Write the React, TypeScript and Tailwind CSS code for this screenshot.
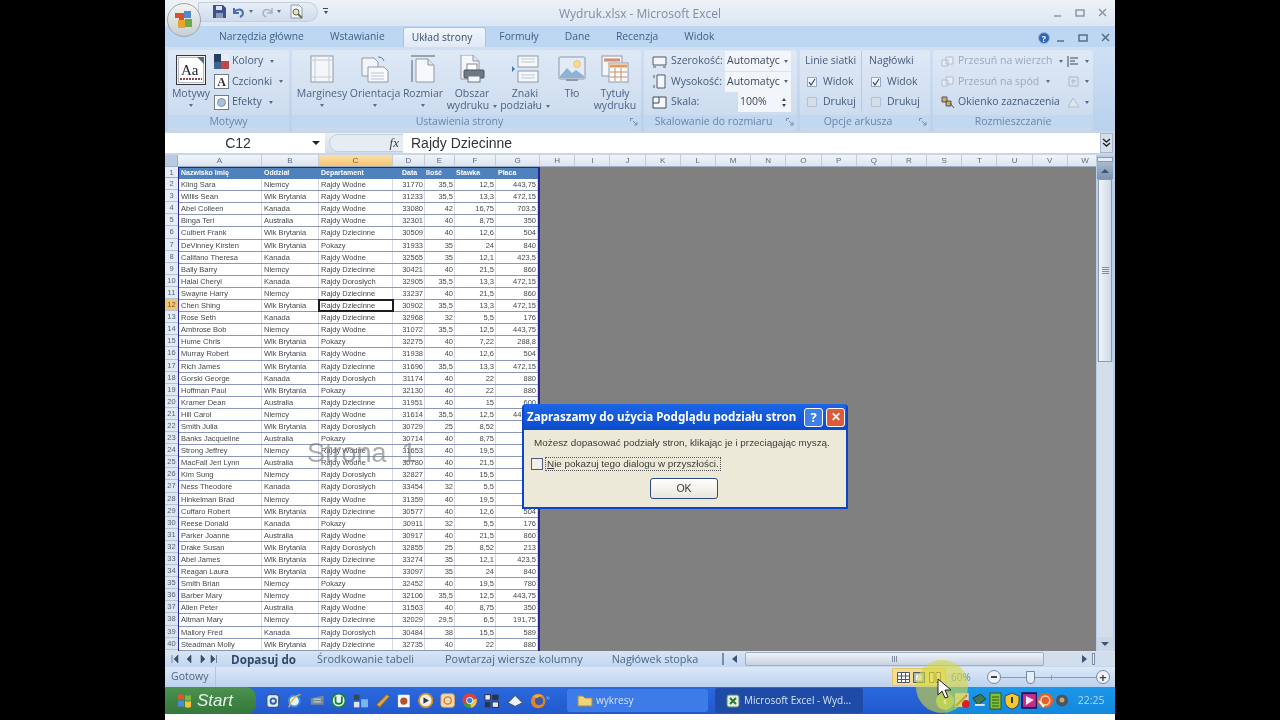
import * as React from "react"

const rows: string[][] = [
  ["Kling Sara", "Niemcy", "Rajdy Wodne", "31770", "35,5", "12,5", "443,75"],
  ["Willis Sean", "Wlk Brytania", "Rajdy Wodne", "31233", "35,5", "13,3", "472,15"],
  ["Abel Colleen", "Kanada", "Rajdy Wodne", "33080", "42", "16,75", "703,5"],
  ["Binga Teri", "Australia", "Rajdy Wodne", "32301", "40", "8,75", "350"],
  ["Culbert Frank", "Wlk Brytania", "Rajdy Dziecinne", "30509", "40", "12,6", "504"],
  ["DeVinney Kirsten", "Wlk Brytania", "Pokazy", "31933", "35", "24", "840"],
  ["Califano Theresa", "Kanada", "Rajdy Wodne", "32565", "35", "12,1", "423,5"],
  ["Bally Barry", "Niemcy", "Rajdy Dziecinne", "30421", "40", "21,5", "860"],
  ["Halai Cheryl", "Kanada", "Rajdy Dorosłych", "32905", "35,5", "13,3", "472,15"],
  ["Swayne Harry", "Niemcy", "Rajdy Dziecinne", "33237", "40", "21,5", "860"],
  ["Chen Shing", "Wlk Brytania", "Rajdy Dziecinne", "30902", "35,5", "13,3", "472,15"],
  ["Rose Seth", "Kanada", "Rajdy Dziecinne", "32968", "32", "5,5", "176"],
  ["Ambrose Bob", "Niemcy", "Rajdy Wodne", "31072", "35,5", "12,5", "443,75"],
  ["Hume Chris", "Wlk Brytania", "Pokazy", "32275", "40", "7,22", "288,8"],
  ["Murray Robert", "Wlk Brytania", "Rajdy Wodne", "31938", "40", "12,6", "504"],
  ["Rich James", "Wlk Brytania", "Rajdy Dziecinne", "31696", "35,5", "13,3", "472,15"],
  ["Gorski George", "Kanada", "Rajdy Dorosłych", "31174", "40", "22", "880"],
  ["Hoffman Paul", "Wlk Brytania", "Pokazy", "32130", "40", "22", "880"],
  ["Kramer Dean", "Australia", "Rajdy Dziecinne", "31951", "40", "15", "600"],
  ["Hill Carol", "Niemcy", "Rajdy Wodne", "31614", "35,5", "12,5", "443,75"],
  ["Smith Julia", "Wlk Brytania", "Rajdy Dorosłych", "30729", "25", "8,52", "213"],
  ["Banks Jacqueline", "Australia", "Pokazy", "30714", "40", "8,75", "350"],
  ["Strong Jeffrey", "Niemcy", "Rajdy Wodne", "31653", "40", "19,5", "780"],
  ["MacFall Jeri Lynn", "Australia", "Rajdy Wodne", "30780", "40", "21,5", "860"],
  ["Kim Sung", "Niemcy", "Rajdy Dorosłych", "32827", "40", "15,5", "620"],
  ["Ness Theodore", "Kanada", "Rajdy Dorosłych", "33454", "32", "5,5", "176"],
  ["Hinkelman Brad", "Niemcy", "Rajdy Wodne", "31359", "40", "19,5", "780"],
  ["Cuffaro Robert", "Wlk Brytania", "Rajdy Dziecinne", "30577", "40", "12,6", "504"],
  ["Reese Donald", "Kanada", "Pokazy", "30911", "32", "5,5", "176"],
  ["Parker Joanne", "Australia", "Rajdy Wodne", "30917", "40", "21,5", "860"],
  ["Drake Susan", "Wlk Brytania", "Rajdy Dorosłych", "32855", "25", "8,52", "213"],
  ["Abel James", "Wlk Brytania", "Rajdy Dziecinne", "33274", "35", "12,1", "423,5"],
  ["Reagan Laura", "Wlk Brytania", "Rajdy Wodne", "33097", "35", "24", "840"],
  ["Smith Brian", "Niemcy", "Pokazy", "32452", "40", "19,5", "780"],
  ["Barber Mary", "Niemcy", "Rajdy Wodne", "32106", "35,5", "12,5", "443,75"],
  ["Allen Peter", "Australia", "Rajdy Wodne", "31563", "40", "8,75", "350"],
  ["Altman Mary", "Niemcy", "Rajdy Dziecinne", "32029", "29,5", "6,5", "191,75"],
  ["Mallory Fred", "Kanada", "Rajdy Dorosłych", "30484", "38", "15,5", "589"],
  ["Steadman Molly", "Wlk Brytania", "Rajdy Dziecinne", "32735", "40", "22", "880"],
]

const headers = ["Nazwisko Imię", "Oddział", "Departament", "Data", "Ilość", "Stawka", "Płaca"]
const tabs = ["Narzędzia główne", "Wstawianie", "Układ strony", "Formuły", "Dane", "Recenzja", "Widok"]
const grayCols = ["H", "I", "J", "K", "L", "M", "N", "O", "P", "Q", "R", "S", "T", "U", "V", "W"]

const colGrid = "grid grid-cols-[83px_57px_74px_32px_30px_41px_42px]"

function Caret() {
  return <span className="inline-block align-middle ml-1 border-x-[2.5px] border-t-[3px] border-x-transparent border-t-[#5a6b82]" />
}

// ---- ribbon icons ----
function MarginIcon() {
  return (
    <svg width="24" height="28" viewBox="0 0 24 28">
      <rect x="1" y="1" width="22" height="26" fill="#f4f6f9" stroke="#8e9aa8" />
      <path d="M5 1v26M19 1v26M1 5h22M1 22h22" stroke="#c3ccd6" fill="none" />
    </svg>
  )
}

function OrientIcon() {
  return (
    <svg width="28" height="28" viewBox="0 0 28 28">
      <path d="M1 3h12l4 4v14H1z" fill="#f2f4f8" stroke="#8e9aa8" />
      <path d="M7 12h16l4 4v11H7z" fill="#f8f9fb" stroke="#8e9aa8" />
      <path d="M10 18h13M10 21h13M10 24h13" stroke="#bcc6d2" />
      <path d="M17 2c3 0 5 1 6 4" fill="none" stroke="#5f7a9c" />
    </svg>
  )
}

function SizeIcon() {
  return (
    <svg width="24" height="28" viewBox="0 0 24 28">
      <path d="M0 1h24M1 5v22" stroke="#55606e" fill="none" />
      <path d="M5 4h12l6 6v17H5z" fill="#f7f8fb" stroke="#8e9aa8" />
      <path d="M17 4v6h6" fill="#dfe5ec" stroke="#8e9aa8" />
    </svg>
  )
}

function PrintAreaIcon() {
  return (
    <svg width="26" height="28" viewBox="0 0 26 28">
      <path d="M2 0h12l6 6v18H2z" fill="#f4f6f9" stroke="#8e9aa8" />
      <path d="M14 0v6h6" fill="#dfe5ec" stroke="#8e9aa8" />
      <rect x="8" y="9" width="10" height="7" fill="#fff" stroke="#7c8794" />
      <rect x="5" y="15" width="20" height="8" rx="1" fill="#6d7884" stroke="#4a535d" />
      <rect x="9" y="21" width="12" height="6" fill="#f4f6f9" stroke="#6d7884" />
    </svg>
  )
}

function BreakIcon() {
  return (
    <svg width="28" height="28" viewBox="0 0 28 28">
      <rect x="7" y="1" width="20" height="11" fill="#f6f8fb" stroke="#8e9aa8" />
      <rect x="7" y="16" width="20" height="11" fill="#f6f8fb" stroke="#8e9aa8" />
      <path d="M10 4h14M10 7h14M10 20h14M10 23h14" stroke="#bcc6d2" />
      <path d="M1 11l3 3-3 3z" fill="#3f78b8" />
    </svg>
  )
}

function BackgroundIcon() {
  return (
    <svg width="28" height="26" viewBox="0 0 28 26">
      <rect x="1" y="1" width="26" height="22" rx="1" fill="#e3ecf6" stroke="#8e9aa8" />
      <circle cx="19" cy="8" r="3.5" fill="#f6dc8c" stroke="#d2a94a" strokeWidth=".5" />
      <path d="M2 20l7-8 5 5 4-3 8 6v2H2z" fill="#8fb1d6" />
      <path d="M8 23h12v2H8z" fill="#8e9aa8" />
    </svg>
  )
}

function TitlesIcon() {
  return (
    <svg width="28" height="28" viewBox="0 0 28 28">
      <rect x="1" y="1" width="20" height="20" fill="#f4f6f9" stroke="#8e9aa8" />
      <path d="M3 5h16" stroke="#d98c6a" strokeWidth="3" />
      <rect x="8" y="8" width="19" height="19" fill="#fbfcfd" stroke="#8e9aa8" />
      <path d="M9 11h17" stroke="#e09a5a" strokeWidth="3" />
      <path d="M9 17h17M9 22h17M14 13v13M20 13v13" stroke="#c98d66" />
    </svg>
  )
}

function ThemesIcon() {
  return (
    <svg width="30" height="30" viewBox="0 0 30 30">
      <rect x=".5" y=".5" width="29" height="29" fill="#f4f1e8" stroke="#33383f" />
      <rect x="2.5" y="2.5" width="25" height="25" fill="#fff" stroke="#b8bcc2" />
      <path d="M21 2h7v7z" fill="#5b6c80" />
      <path d="M4 24h22" stroke="#8a4d4d" strokeWidth="2" strokeDasharray="2 1" />
      <text x="5" y="20" fontSize="15" fontFamily="Liberation Serif, serif" fill="#20262e">Aa</text>
    </svg>
  )
}

function ColorsIcon() {
  return (
    <svg width="15" height="15" viewBox="0 0 15 15">
      <rect width="7" height="15" fill="#27405f" />
      <rect x="7" width="8" height="7" fill="#e9edf2" />
      <rect x="7" y="7" width="8" height="8" fill="#b84a4a" />
      <rect y="8" width="7" height="7" fill="#3f6491" />
    </svg>
  )
}

function FontsIcon() {
  return (
    <div className="w-[15px] h-[15px] bg-white border border-[#6f7c8c] flex items-center justify-center text-[12px] leading-none font-bold text-[#333] font-['Liberation_Serif',serif]">
      A
    </div>
  )
}

function EffectsIcon() {
  return (
    <div className="w-[15px] h-[15px] bg-white border border-[#6f7c8c] flex items-center justify-center">
      <div className="w-[9px] h-[9px] rounded-full bg-[#a9c1de] border border-[#7f97b6]" />
    </div>
  )
}

function Tiny({ d, fill = "none", stroke = "#4d5b6c" }: { d: string; fill?: string; stroke?: string }) {
  return (
    <svg width="15" height="15" viewBox="0 0 15 15">
      <path d={d} fill={fill} stroke={stroke} />
    </svg>
  )
}

function RibbonGroup({ label, launcher, className, children }: { label: string; launcher?: boolean; className: string; children: React.ReactNode }) {
  return (
    <div className={`flex flex-col rounded-[3px] bg-gradient-to-b from-[#dfe9f6] to-[#c8d9ed] ${className}`}>
      <div className="h-[65px] flex">{children}</div>
      <div className={`h-[13px] rounded-b-[3px] bg-[#c2d8f0] flex items-center justify-center relative text-[10.5px] leading-none text-[#6b86a8] ${launcher ? "pr-[14px]" : ""}`}>
        {label}
        {launcher && (
          <svg className="absolute right-[3px] top-[3px]" width="8" height="8" viewBox="0 0 8 8">
            <path d="M.5 3V.5H3M3 3l4 4M7 4v3H4" fill="none" stroke="#7a8ea8" />
          </svg>
        )}
      </div>
    </div>
  )
}

function BigButton({ width, icon, lines, caret }: { width: string; icon: React.ReactNode; lines: string[]; caret?: "below" | "inline" }) {
  return (
    <div className={`${width} flex flex-col items-center pt-[5px]`}>
      <div className="h-[28px] flex items-center justify-center">{icon}</div>
      <div className="mt-[4px] text-center text-[10.5px] leading-[12px] text-[#4d6485]">
        <div className="whitespace-nowrap">{lines[0]}</div>
        {lines[1] ? (
          <div className="whitespace-nowrap">
            {lines[1]}
            {caret === "inline" && <Caret />}
          </div>
        ) : caret === "below" ? (
          <div className="flex justify-center h-[12px] items-center">
            <span className="border-x-[2.5px] border-t-[3px] border-x-transparent border-t-[#5a6b82]" />
          </div>
        ) : null}
      </div>
    </div>
  )
}

function SmallRow({ icon, text, muted, caret }: { icon: React.ReactNode; text: string; muted?: boolean; caret?: boolean }) {
  return (
    <div className={`h-[20.5px] flex items-center gap-[3px] text-[10.5px] whitespace-nowrap ${muted ? "text-[#9aa9bc]" : "text-[#465c7c]"}`}>
      <div className="w-[15px] flex justify-center">{icon}</div>
      {text}
      {caret && <Caret />}
    </div>
  )
}

function Check({ checked, label }: { checked?: boolean; label: string }) {
  return (
    <div className="h-[20.5px] flex items-center gap-[6px] pl-[2px] text-[10.5px] text-[#465c7c]">
      <div className={`w-[10px] h-[10px] border flex items-center justify-center ${checked ? "bg-[#eef3f9] border-[#9aa9bc]" : "bg-[#d5dfeb] border-[#b4c1d1]"}`}>
        {checked && (
          <svg width="8" height="8" viewBox="0 0 8 8">
            <path d="M1 4l2 3 4-6" fill="none" stroke="#3a4a60" strokeWidth="1.2" />
          </svg>
        )}
      </div>
      {label}
    </div>
  )
}

function SizeField({ label, icon, value, kind }: { label: string; icon: React.ReactNode; value: string; kind: "select" | "spin" }) {
  return (
    <div className="h-[20.5px] flex items-center text-[10.5px] text-[#465c7c]">
      <div className="w-[18px] flex justify-center">{icon}</div>
      <div className="ml-[3px] flex-1 whitespace-nowrap">{label}</div>
      <div className={`h-[20px] bg-[#f2f6fb] flex items-center justify-between pl-[2px] pr-[3px] text-[#3b4a5e] ${kind === "select" ? "w-[66px]" : "w-[53px] pl-[2px]"}`}>
        <span>{value}</span>
        {kind === "select" ? (
          <span className="border-x-[2.5px] border-t-[3px] border-x-transparent border-t-[#5a6b82]" />
        ) : (
          <span className="flex flex-col gap-[3px] pr-[2px]">
            <span className="border-x-[2.5px] border-b-[3px] border-x-transparent border-b-[#3c4654]" />
            <span className="border-x-[2.5px] border-t-[3px] border-x-transparent border-t-[#3c4654]" />
          </span>
        )}
      </div>
    </div>
  )
}

function Ribbon() {
  return (
    <div className="h-[84px] flex gap-[3px] pl-[3px] pt-[3px] bg-gradient-to-b from-[#cfe0f4] to-[#b9d1ec]">
      <RibbonGroup label="Motywy" className="w-[121px]">
        <BigButton width="w-[46px]" icon={<div className="mt-[2px]"><ThemesIcon /></div>} lines={["Motywy"]} caret="below" />
        <div className="pt-[1px]">
          <SmallRow icon={<ColorsIcon />} text="Kolory" caret />
          <SmallRow icon={<FontsIcon />} text="Czcionki" caret />
          <SmallRow icon={<EffectsIcon />} text="Efekty" caret />
        </div>
      </RibbonGroup>
      <RibbonGroup label="Ustawienia strony" launcher className="w-[349px]">
        <div className="flex pl-[2px]">
          <BigButton width="w-[56px]" icon={<MarginIcon />} lines={["Marginesy"]} caret="below" />
          <BigButton width="w-[50px]" icon={<OrientIcon />} lines={["Orientacja"]} caret="below" />
          <BigButton width="w-[46px]" icon={<SizeIcon />} lines={["Rozmiar"]} caret="below" />
          <BigButton width="w-[52px]" icon={<PrintAreaIcon />} lines={["Obszar", "wydruku"]} caret="inline" />
          <BigButton width="w-[54px]" icon={<BreakIcon />} lines={["Znaki", "podziału"]} caret="inline" />
          <BigButton width="w-[40px]" icon={<BackgroundIcon />} lines={["Tło"]} />
          <BigButton width="w-[46px]" icon={<TitlesIcon />} lines={["Tytuły", "wydruku"]} />
        </div>
      </RibbonGroup>
      <RibbonGroup label="Skalowanie do rozmiaru" launcher className="w-[153px]">
        <div className="w-full pl-[6px] pr-[6px] pt-[1px]">
          <SizeField
            label="Szerokość:"
            value="Automatyc"
            kind="select"
            icon={<Tiny d="M1 3h13v8H1zM1 13h3M11 13h3" fill="#f4f6f9" />}
          />
          <SizeField
            label="Wysokość:"
            value="Automatyc"
            kind="select"
            icon={<Tiny d="M5 1h8v13H5zM2 1v3M2 11v3" fill="#f4f6f9" />}
          />
          <SizeField
            label="Skala:"
            value="100%"
            kind="spin"
            icon={<Tiny d="M1 2h13v11H1zM7 2v6H1" fill="#f4f6f9" stroke="#3f4a58" />}
          />
        </div>
      </RibbonGroup>
      <RibbonGroup label="Opcje arkusza" launcher className="w-[130px]">
        <div className="flex w-full pl-[5px] pt-[1px]">
          <div className="w-[57px] border-r border-[#b9c8da] h-[60px]">
            <div className="h-[20.5px] flex items-center text-[10.5px] text-[#465c7c] whitespace-nowrap">Linie siatki</div>
            <Check checked label="Widok" />
            <Check label="Drukuj" />
          </div>
          <div className="pl-[7px]">
            <div className="h-[20.5px] flex items-center text-[10.5px] text-[#465c7c]">Nagłówki</div>
            <Check checked label="Widok" />
            <Check label="Drukuj" />
          </div>
        </div>
      </RibbonGroup>
      <RibbonGroup label="Rozmieszczanie" className="w-[160px]">
        <div className="flex w-full pl-[7px] pt-[1px]">
          <div className="w-[126px]">
            <SmallRow muted caret icon={<Tiny d="M2 6h6v6H2zM6 3h7v7H6z" fill="#e8eef6" stroke="#b2bdcb" />} text="Przesuń na wierzch" />
            <SmallRow muted caret icon={<Tiny d="M6 3h7v7H6zM2 6h6v6H2z" fill="#e8eef6" stroke="#b2bdcb" />} text="Przesuń na spód" />
            <SmallRow icon={<Tiny d="M2 2h5v5H2zM6 6h5v5H6zM10 8l4 5" fill="#d8a85a" stroke="#4c5664" />} text="Okienko zaznaczenia" />
          </div>
          <div>
            <div className="h-[20.5px] flex items-center"><Tiny d="M2 2v11M4 4h8M4 7h5M4 10h8" stroke="#3c4654" /><Caret /></div>
            <div className="h-[20.5px] flex items-center"><Tiny d="M3 3h9v9H3zM7 5v5M5 7h5" stroke="#a9b6c6" /><Caret /></div>
            <div className="h-[20.5px] flex items-center"><Tiny d="M7 3L2 12h11z" fill="#dfe6ef" stroke="#b2bdcb" /><Caret /></div>
          </div>
        </div>
      </RibbonGroup>
    </div>
  )
}

function TitleBar() {
  return (
    <div className="h-[26px] relative flex items-center bg-gradient-to-b from-[#eef2f7] to-[#dbe6f4]">
      <div className="ml-[33px] mt-[-3px] w-[120px] h-[20px] rounded-r-full rounded-l-sm bg-gradient-to-b from-[#e8eef6] to-[#cfdcec] border border-[#c3d0e0] flex items-center pl-[14px]">
        <svg width="13" height="13" viewBox="0 0 13 13">
          <path d="M0 0h10l3 3v10H0z" fill="#3e4f92" />
          <rect x="3" y="1" width="6" height="4" fill="#dfe4ef" />
          <rect x="3" y="8" width="7" height="5" fill="#8c97b8" />
        </svg>
        <svg width="12" height="12" viewBox="0 0 12 12" className="ml-[7px]">
          <path d="M1 2v5h5M1 7c2-4 8-5 9 0 0 2-1 3-3 4" fill="none" stroke="#4b6fae" strokeWidth="2" />
        </svg>
        <Caret />
        <svg width="12" height="12" viewBox="0 0 12 12" className="ml-[8px]">
          <path d="M11 2v5H6M11 7C9 3 3 2 2 7c0 2 1 3 3 4" fill="none" stroke="#a4b4c8" strokeWidth="1.5" />
        </svg>
        <Caret />
        <svg width="15" height="15" viewBox="0 0 15 15" className="ml-[8px]">
          <path d="M2 1h8l3 3v10H2z" fill="#f6f7f9" stroke="#8f9aa8" />
          <circle cx="7" cy="8" r="3" fill="#dce7c8" stroke="#5e6b4a" />
          <path d="M9 10l4 4" stroke="#7a6a3a" strokeWidth="2" />
        </svg>
      </div>
      <div className="ml-[5px] mt-[-5px] flex flex-col items-center gap-[2px]">
        <span className="w-[5px] h-px bg-[#3c4654]" />
        <span className="border-x-[2.5px] border-t-[3px] border-x-transparent border-t-[#3c4654]" />
      </div>
      <div className="absolute inset-x-0 top-[6px] text-center text-[12px] leading-[15px] text-[#7d8da3]">Wydruk.xlsx - Microsoft Excel</div>
      <div className="ml-auto mr-[5px] flex items-center">
        <WinButtons color="#8f97a3" />
      </div>
    </div>
  )
}

function WinButtons({ color }: { color: string }) {
  return (
    <svg width="58" height="12" viewBox="0 0 58 12">
      <path d="M2 9h7" stroke={color} strokeWidth="1.5" />
      <path d="M24 3h8v6h-8z" fill="none" stroke={color} strokeWidth="1.5" />
      <path d="M47 2l7 7M54 2l-7 7" stroke={color} strokeWidth="1.5" />
    </svg>
  )
}

function TabBar() {
  return (
    <div className="h-[21px] flex items-end pl-[41px] bg-[#bdd7f3] text-[10.3px] text-[#3e5f8a]">
      {tabs.map((tab) => (
        <div
          key={tab}
          className={`h-[20px] flex items-center whitespace-nowrap rounded-t-[3px] ${
            tab === "Układ strony"
              ? "ml-[5px] pl-[8px] pr-[13px] bg-gradient-to-b from-[#f1f6fc] to-[#dfe9f6] text-[#3c4f6b] border-x border-t border-[#a9c2de]"
              : "px-[13px]"
          }`}
        >
          {tab}
        </div>
      ))}
      <div className="ml-auto mr-[2px] mb-[3px] flex items-center gap-[5px]">
        <div className="w-[12px] h-[12px] rounded-full bg-[#2f64b8] border border-[#9bb7da] text-white text-[9px] leading-none font-bold flex items-center justify-center">?</div>
        <WinButtons color="#5a6c84" />
      </div>
    </div>
  )
}

function FormulaBar() {
  return (
    <div className="h-[24px] pt-[2px] pb-[2px] bg-[#c9d6e6] flex font-['Liberation_Sans',sans-serif] text-[14px] text-[#30343a]">
      <div className="w-[160px] bg-white flex items-center">
        <div className="w-[146px] text-center">C12</div>
        <span className="ml-[1px] border-x-[4px] border-t-[4px] border-x-transparent border-t-[#222]" />
      </div>
      <div className="w-[78px] bg-gradient-to-b from-[#e9eff6] to-[#d3dfec] flex items-center pl-[4px]">
        <div className="w-[74px] h-[18px] rounded-l-full bg-[#e6ecf3] border border-[#c3ceda] border-r-0 flex items-center justify-end pr-[4px] italic font-['Liberation_Serif',serif] text-[13px] text-[#3a3f46]">
          fx
        </div>
      </div>
      <div className="flex-1 bg-white flex items-center pl-[8px]">Rajdy Dziecinne</div>
      <div className="w-[13px] mr-[2px] bg-[#d6e0ec] border border-[#a9b6c6] flex items-center justify-center">
        <svg width="9" height="10" viewBox="0 0 9 10">
          <path d="M1 1l3.5 3L8 1M1 5l3.5 3L8 5" fill="none" stroke="#222" strokeWidth="1.4" />
        </svg>
      </div>
    </div>
  )
}

function SheetRow({ num, cells }: { num: number; cells: string[] }) {
  return (
    <div className={colGrid + " h-[12.1px] border-b border-[#8a98b6] bg-white text-[7.5px] leading-[12px] text-[#45494e]"}>
      {cells.map((c, i) => (
        <div
          key={i}
          className={`relative overflow-hidden border-r border-[#d3d9e4] whitespace-nowrap ${i < 3 ? "pl-[2px]" : "text-right pr-[1px]"} ${
            num === 12 && i === 2 ? "outline-2 -outline-offset-1 outline-[#1d1d1d] z-10" : ""
          }`}
        >
          {c}
        </div>
      ))}
    </div>
  )
}

function Sheet() {
  return (
    <div className="h-[496px] flex font-['Liberation_Sans',sans-serif]">
      <div className="w-[931px] flex flex-col relative">
        {/* column letters */}
        <div className="h-[12px] flex overflow-hidden bg-gradient-to-b from-[#f1f5fa] to-[#dbe4ef] border-b border-[#9fb0c6] text-[8px] leading-[11px] text-[#5a6a80] text-center">
          <div className="w-[13px] shrink-0 bg-[#b9cbe2] border-r border-[#9fb0c6]" />
          {[["A", "w-[84px]"], ["B", "w-[57px]"], ["C", "w-[74px]"], ["D", "w-[32px]"], ["E", "w-[30px]"], ["F", "w-[41px]"], ["G", "w-[44px]"]].map(([l, w]) => (
            <div key={l} className={`${w} shrink-0 border-r border-[#c0ccdb] ${l === "C" ? "bg-gradient-to-b from-[#fbe0a8] to-[#f6c470] text-[#6b5a30]" : ""}`}>
              {l}
            </div>
          ))}
          {grayCols.map((c) => (
            <div key={c} className="w-[35.2px] shrink-0 border-r border-[#c0ccdb]">{c}</div>
          ))}
        </div>
        <div className="flex-1 flex bg-[#808080] overflow-hidden">
          <div className="w-[13px] bg-gradient-to-b from-[#e6edf6] to-[#dbe4ef] text-[7.5px] leading-[12px] text-[#55647a] text-center">
            <div className="h-[11.1px] border-b border-[#9fb0c6] leading-[11px]">1</div>
            {rows.map((_, i) => (
              <div key={i} className={`h-[12.1px] border-b border-[#b4c2d4] ${i + 2 === 12 ? "bg-[#f6c470] text-[#6b5a30]" : ""}`}>
                {i + 2}
              </div>
            ))}
          </div>
          <div className="w-[362px] border-t border-l border-r-2 border-[#24249a] overflow-hidden">
            <div className={colGrid + " h-[11.1px] bg-[#4f81bd] text-[7px] leading-[10px] font-bold text-white"}>
              {headers.map((h, i) => (
                <div key={h} className={i < 3 ? "pl-[2px]" : i === 3 ? "pl-[9px]" : i === 4 ? "pl-[1px]" : i === 5 ? "pl-[1px]" : "pl-[2px]"}>{h}</div>
              ))}
            </div>
            {rows.map((r, i) => (
              <SheetRow key={i} num={i + 2} cells={r} />
            ))}
          </div>
        </div>
        {/* page watermark */}
        <div className="absolute left-[142px] top-[282px] text-[27px] leading-[32px] text-[#77777799] whitespace-pre">Strona  1</div>
      </div>
      <VScroll />
    </div>
  )
}

function VScroll() {
  return (
    <div className="w-[19px] pl-[1px] pr-[2px] flex flex-col bg-[#b9cee8]">
      <div className="h-[5px] mt-[2px] bg-[#e6edf6] border border-[#8a9ab0]" />
      <div className="h-[17px] bg-gradient-to-b from-[#a8b9cf] to-[#7f93ae] flex items-center justify-center">
        <span className="border-x-[4px] border-b-[4px] border-x-transparent border-b-[#3f5470]" />
      </div>
      <div className="h-[183px] mx-[1px] bg-gradient-to-r from-[#f0f4f9] to-[#cfdae8] border border-[#8a9ab0] flex flex-col items-center justify-center gap-[1px]">
        <span className="w-[7px] h-px bg-[#7f8ea2]" />
        <span className="w-[7px] h-px bg-[#7f8ea2]" />
        <span className="w-[7px] h-px bg-[#7f8ea2]" />
        <span className="w-[7px] h-px bg-[#7f8ea2]" />
      </div>
      <div className="flex-1 bg-[#d3deec]" />
      <div className="h-[14px] bg-[#c9d7e8] flex items-center justify-center">
        <span className="border-x-[4px] border-t-[4px] border-x-transparent border-t-[#3f5470]" />
      </div>
    </div>
  )
}

function SheetTabs() {
  const inactive = [
    ["Środkowanie tabeli", "ml-[21px]"],
    ["Powtarzaj wiersze kolumny", "ml-[31px]"],
    ["Nagłówek stopka", "ml-[29px]"],
  ]
  return (
    <div className="h-[16px] flex items-center bg-gradient-to-b from-[#d6e4f5] to-[#c3d7ef] text-[10.9px] leading-[16px] text-[#4c6588] font-['Open_Sans',sans-serif] whitespace-nowrap">
      <div className="w-[58px] pl-[6px] flex items-center gap-[7px]">
        <svg width="46" height="8" viewBox="0 0 46 8">
          <path d="M1 0v8M7 0L3 4l4 4zM20 0l-4 4 4 4zM30 0l4 4-4 4zM40 0l4 4-4 4zM45.500 0v8" fill="#3d4f66" stroke="#3d4f66" strokeWidth=".6" />
        </svg>
      </div>
      <div className="ml-[8px] font-bold text-[11.7px] text-[#33496a]">Dopasuj do</div>
      {inactive.map(([t, m]) => (
        <div key={t} className={m}>{t}</div>
      ))}
      <div className="ml-[24px] w-[2px] h-[12px] border-x border-[#7a8ea8]" />
      <div className="ml-[6px] w-[8px] flex justify-center">
        <span className="border-y-[4px] border-r-[5px] border-y-transparent border-r-[#3f5470]" />
      </div>
      <div className="ml-[7px] w-[299px] h-[14px] rounded-[2px] bg-gradient-to-b from-[#eef2f8] to-[#c7d3e2] border border-[#9fb0c6] flex justify-center items-center gap-[1px]">
        <span className="w-px h-[6px] bg-[#7f8ea2]" />
        <span className="w-px h-[6px] bg-[#7f8ea2]" />
        <span className="w-px h-[6px] bg-[#7f8ea2]" />
      </div>
      <div className="flex-1 h-[14px] bg-[#d3deec] flex items-center justify-end gap-[5px]">
        <span className="border-y-[4px] border-l-[5px] border-y-transparent border-l-[#3f5470]" />
        <span className="w-[3px] h-[12px] bg-[#eef2f8] border border-[#7a8ea8] mr-[20px]" />
      </div>
    </div>
  )
}

function StatusBar() {
  return (
    <div className="h-[20px] flex items-center bg-gradient-to-b from-[#dce8f8] to-[#bcd2ee] text-[10.5px] text-[#4f6584] font-['Open_Sans',sans-serif]">
      <div className="w-[51px] pl-[6px] border-r border-[#b3c6de] h-full flex items-center">Gotowy</div>
      <div className="ml-[676px] w-[54px] h-[18px] bg-[#f7dd92] border border-[#e2c56e] flex items-center justify-around px-[2px]">
        <svg width="13" height="11" viewBox="0 0 13 11"><path d="M.5.5h12v10H.5zM.5 4h12M.5 7.500h12M4.500.5v10M8.500.5v10" fill="#fff" stroke="#4c5664" /></svg>
        <svg width="12" height="11" viewBox="0 0 12 11"><path d="M.5.5h11v10H.5z" fill="#a9b6c6" stroke="#4c5664" /><rect x="3" y="2.500" width="6" height="6" fill="#eef2f8" /></svg>
        <svg width="12" height="11" viewBox="0 0 12 11"><path d="M.5.5h4.500v10H.5zM7 .5h4.500v10H7z" fill="#fbeeb4" stroke="#7a6a3a" /></svg>
      </div>
      <div className="ml-[5px] text-[10px] text-[#6f8098] w-[36px]">60%</div>
      <div className="w-[14px] h-[14px] rounded-full bg-[#eef2f8] border border-[#76889e] flex items-center justify-center">
        <span className="w-[6px] h-[2px] bg-[#3c4654]" />
      </div>
      <div className="w-[95px] h-px bg-[#8a9ab0] relative">
        <div className="absolute left-[25px] -top-[6px] w-[9px] h-[13px] bg-[#e6edf6] border border-[#76889e] rounded-b-[4px]" />
        <div className="absolute left-[50px] -top-[2px] w-px h-[5px] bg-[#8a9ab0]" />
      </div>
      <div className="w-[14px] h-[14px] rounded-full bg-[#eef2f8] border border-[#76889e] flex items-center justify-center text-[13px] leading-none font-bold text-[#3c4654]">+</div>
    </div>
  )
}

function QuickLaunch() {
  return (
    <div className="ml-[10px] w-[280px] flex items-center gap-[6.8px]">
      <svg width="16" height="16" viewBox="0 0 16 16"><rect x="1" y="1" width="13" height="14" rx="3" fill="#dfe8f5" stroke="#345" /><circle cx="8" cy="8" r="3" fill="none" stroke="#2c5fb0" strokeWidth="2" /></svg>
      <svg width="17" height="17" viewBox="0 0 17 17"><circle cx="8" cy="9" r="6" fill="#e8f2fb" stroke="#3f8ce0" strokeWidth="2" /><path d="M2 16C4 8 11 2 15 2" fill="none" stroke="#e6b53a" strokeWidth="1.5" /></svg>
      <svg width="16" height="16" viewBox="0 0 16 16"><path d="M1 5l14-3v10H1z" fill="#7b8a94" /><path d="M4 6h8M4 9h8" stroke="#d8e0e6" /></svg>
      <svg width="17" height="17" viewBox="0 0 17 17"><circle cx="8.500" cy="8.500" r="7.500" fill="#e8f5ec" stroke="#17804a" strokeWidth="2" /><path d="M5 4v6c0 3 7 3 7 0V4" fill="none" stroke="#17804a" strokeWidth="2" /></svg>
      <svg width="17" height="16" viewBox="0 0 17 16"><rect x="1" y="1" width="6" height="6" fill="#3c4450" /><rect x="1" y="9" width="6" height="6" fill="#dfe4ea" /><rect x="9" y="6" width="8" height="9" fill="#7ab4ea" /></svg>
      <svg width="17" height="17" viewBox="0 0 17 17"><path d="M2 13L13 2l3 2L5 16z" fill="#e0a63c" stroke="#8a6420" /></svg>
      <svg width="15" height="16" viewBox="0 0 15 16"><rect x="1" y="1" width="13" height="14" rx="1" fill="#f4f6f9" /><circle cx="7.500" cy="8" r="4" fill="#b4542e" /></svg>
      <svg width="17" height="17" viewBox="0 0 17 17"><circle cx="8.500" cy="8.500" r="7.500" fill="#f3f0e6" stroke="#d28a2a" strokeWidth="2" /><path d="M6 5l6 3.500L6 12z" fill="#2c3c4c" /></svg>
      <svg width="17" height="17" viewBox="0 0 17 17"><rect x="1" y="1" width="15" height="15" rx="3" fill="#f4d9a8" stroke="#d89a5a" /><circle cx="8.500" cy="8.500" r="4" fill="none" stroke="#d07a3a" strokeWidth="1.5" /></svg>
      <svg width="17" height="17" viewBox="0 0 17 17"><circle cx="8.500" cy="8.500" r="8" fill="#d8443a" /><path d="M8.500 8.500L2 13a8 8 0 0 0 8 3.500z" fill="#3d9a4a" /><path d="M8.500 8.500l7.500-2a8 8 0 0 1-6 10z" fill="#f0c83a" /><circle cx="8.500" cy="8.500" r="3.500" fill="#3f7fe0" stroke="#fff" /></svg>
      <svg width="17" height="16" viewBox="0 0 17 16"><rect x="1" y="1" width="6" height="6" fill="#e6e9ee" stroke="#223" /><rect x="9" y="1" width="7" height="6" fill="#2c3440" /><rect x="1" y="9" width="6" height="6" fill="#2c3440" /><rect x="9" y="9" width="7" height="6" fill="#e6e9ee" stroke="#223" /></svg>
      <svg width="18" height="15" viewBox="0 0 18 15"><path d="M1 10l8-8 8 8-8 4z" fill="#eef2f6" stroke="#3c4654" /></svg>
      <svg width="18" height="18" viewBox="0 0 18 18"><circle cx="9" cy="9" r="8" fill="#e0862a" /><circle cx="10" cy="9" r="4.500" fill="#3c58a8" /><path d="M3 4c4-3 9-3 12 0-3-1-5 0-7 2z" fill="#f0b040" /></svg>
    </div>
  )
}

function TraySlot({ children }: { children: React.ReactNode }) {
  return <div className="w-[16.7px] flex justify-center">{children}</div>
}

function Tray() {
  return (
    <div className="ml-auto w-[170px] h-full bg-gradient-to-b from-[#1c97ea] to-[#1288dd] flex items-center text-[11px] text-[#b9d6f5] font-['Open_Sans',sans-serif]">
      <div className="w-[18px] h-[18px] -ml-[9px] rounded-full bg-[#8fc48a] flex items-center justify-center text-white text-[12px] leading-none font-bold">‹</div>
      <TraySlot><svg width="17" height="17" viewBox="0 0 17 17"><rect x="1" y="1" width="14" height="14" fill="#d8d0b8" /><path d="M2 14L13 3" stroke="#8a5a3a" strokeWidth="2" /><circle cx="12" cy="12" r="4" fill="#d8202a" /></svg></TraySlot>
      <TraySlot><svg width="17" height="17" viewBox="0 0 17 17"><path d="M2 6l8-4 5 5-8 6z" fill="#3f7a54" stroke="#1d3c2c" /><path d="M4 13h10" stroke="#dfe6ee" strokeWidth="2" /></svg></TraySlot>
      <TraySlot><svg width="13" height="18" viewBox="0 0 13 18"><rect x="1" y="1" width="11" height="16" fill="#7ec23c" stroke="#2f5a12" /><path d="M3 5h7M3 8h7M3 11h7M3 14h7" stroke="#2f5a12" /></svg></TraySlot>
      <TraySlot><svg width="16" height="18" viewBox="0 0 16 18"><path d="M8 1l7 3v5c0 4-3 7-7 8-4-1-7-4-7-8V4z" fill="#f2c82a" stroke="#3c4654" /><path d="M8 5v6" stroke="#333" strokeWidth="2" /></svg></TraySlot>
      <TraySlot><svg width="17" height="17" viewBox="0 0 17 17"><rect width="17" height="17" fill="#1a1a6a" /><rect x="2" y="2" width="13" height="13" fill="#cc2a8a" /><path d="M5 4l8 4-8 5z" fill="#f0f0f5" /></svg></TraySlot>
      <TraySlot><svg width="17" height="17" viewBox="0 0 17 17"><circle cx="8.500" cy="8.500" r="8" fill="#e2602a" /><circle cx="8.500" cy="8.500" r="4.500" fill="none" stroke="#f6d2b4" strokeWidth="1.500" /><path d="M2 9l5 6" stroke="#fff" strokeWidth="2" /></svg></TraySlot>
      <TraySlot><svg width="14" height="15" viewBox="0 0 14 15"><circle cx="7" cy="7.500" r="6" fill="#4a5460" /><circle cx="7" cy="7" r="2.500" fill="#c8a868" /></svg></TraySlot>
      <div className="ml-[7px] text-[10.5px]">22:25</div>
    </div>
  )
}

function Taskbar() {
  return (
    <div className="h-[27px] flex items-center bg-gradient-to-b from-[#2a69de] to-[#2259cc] text-[11px] text-[#d5e3f7] font-['Open_Sans',sans-serif]">
      <div className="w-[91px] h-full rounded-r-[10px] bg-gradient-to-b from-[#4d9250] to-[#33773a] flex items-center pl-[12px] gap-[4px]">
        <svg width="16" height="16" viewBox="0 0 16 16">
          <path d="M1 2c2-1 4-1 6 0v5c-2-1-4-1-6 0z" fill="#e2542a" />
          <path d="M8 2c2 1 4 1 6 0v5c-2 1-4 1-6 0z" fill="#7fb83a" />
          <path d="M1 8c2-1 4-1 6 0v6c-2-1-4-1-6 0z" fill="#4c8ae0" />
          <path d="M8 8c2 1 4 1 6 0v6c-2 1-4 1-6 0z" fill="#f0c43a" />
        </svg>
        <span className="text-[17px] leading-none italic text-[#e9f3e9] font-['Liberation_Sans',sans-serif]">Start</span>
      </div>
      <QuickLaunch />
      <div className="text-[8px] text-[#9dc0ee] w-[20px] -mt-[8px]">»</div>
      <div className="ml-[1px] w-[141px] h-[23px] rounded-[3px] bg-[#3d7ce8] flex items-center pl-[10px] gap-[3px] text-[10px]">
        <svg width="16" height="13" viewBox="0 0 16 13"><path d="M1 2h5l2 2h7v8H1z" fill="#f1d47a" stroke="#a88a3a" /></svg>
        wykresy
      </div>
      <div className="ml-[7px] w-[148px] h-[25px] rounded-[3px] bg-[#1e4ba6] flex items-center pl-[11px] gap-[4px] text-[10px] whitespace-nowrap">
        <svg width="14" height="14" viewBox="0 0 14 14"><rect x="1" y="1" width="12" height="12" rx="2" fill="#e4efe4" stroke="#5c8f5c" /><path d="M4 4l6 6M10 4l-6 6" stroke="#26743a" strokeWidth="2" /></svg>
        Microsoft Excel - Wyd...
      </div>
      <Tray />
    </div>
  )
}

function Dialog() {
  return (
    <div className="absolute left-[357px] top-[404px] w-[326px] h-[105px] z-20 rounded-t-[4px] bg-[#0a45cf] p-[2px] pt-0 flex flex-col font-['Liberation_Sans',sans-serif]">
      <div className="h-[26px] flex items-center pl-[3px] text-[11.6px] font-bold text-white bg-gradient-to-b from-[#1c66e8] to-[#0a4ccb] whitespace-nowrap font-['Noto_Sans',sans-serif]">
        Zapraszamy do użycia Podglądu podziału stron
        <div className="ml-auto shrink-0 w-[19px] h-[19px] mr-[3px] rounded-[3px] bg-[#3f7fe8] border border-white flex items-center justify-center text-[13px] leading-none">?</div>
        <div className="shrink-0 w-[19px] h-[19px] mr-[1px] rounded-[3px] bg-[#dc5a3a] border border-white flex items-center justify-center text-[12px] leading-none">✕</div>
      </div>
      <div className="flex-1 bg-[#ece9d8] text-[9.9px] text-[#3a3a3a] flex flex-col">
        <div className="mt-[6px] pl-[10px] leading-[14px] whitespace-nowrap">Możesz dopasować podziały stron, klikając je i przeciągając myszą.</div>
        <div className="mt-[7px] pl-[7px] flex items-center gap-[2px]">
          <div className="w-[12px] h-[12px] bg-[#f2f0e6] border border-[#4a5a7a]" />
          <div className="px-[1px] leading-[12px] border border-dotted border-[#555] whitespace-nowrap"><span className="underline">N</span>ie pokazuj tego dialogu w przyszłości.</div>
        </div>
        <div className="mt-[7px] self-center w-[68px] h-[21px] ml-[-2px] rounded-[3px] bg-gradient-to-b from-[#ffffff] to-[#e8e6da] border-[1.5px] border-[#2a4a80] flex items-center justify-center text-[10.5px]">OK</div>
      </div>
    </div>
  )
}

function Overlay() {
  return (
    <>
      <div className="absolute left-[751px] top-[660px] w-[52px] h-[53px] rounded-full bg-[#d6d83a99] z-20" />
      <svg className="absolute left-[772px] top-[678px] z-30" width="16" height="22" viewBox="0 0 16 22">
        <path d="M1 1v16l4-4 3 7 3-1-3-7h6z" fill="#fff" stroke="#222" />
      </svg>
      {/* office orb */}
      <div className="absolute left-[2px] top-[3px] w-[34px] h-[34px] rounded-full bg-gradient-to-b from-[#f4f4f0] to-[#c8cfd2] border border-[#9aa6b2] flex items-center justify-center z-20">
        <svg width="20" height="20" viewBox="0 0 20 20">
          <path d="M1 3h9v8H5v-3H1z" fill="#d9502a" />
          <path d="M10 1h7v7h-7z" fill="#4d8ad0" />
          <path d="M4 10h7v8H4z" fill="#e8a42c" />
          <path d="M11 9h7v8h-7z" fill="#6fa84c" />
        </svg>
      </div>
    </>
  )
}

export default function App() {
  return (
    <div className="w-[1280px] h-[720px] bg-black overflow-hidden flex justify-center font-['Open_Sans',sans-serif]">
      <div className="w-[950px] h-full bg-white relative blur-[0.4px]">
        <div className="h-[714px] flex flex-col">
          <TitleBar />
          <TabBar />
          <Ribbon />
          <FormulaBar />
          <Sheet />
          <SheetTabs />
          <StatusBar />
          <Taskbar />
        </div>
        <Dialog />
        <Overlay />
      </div>
    </div>
  )
}
